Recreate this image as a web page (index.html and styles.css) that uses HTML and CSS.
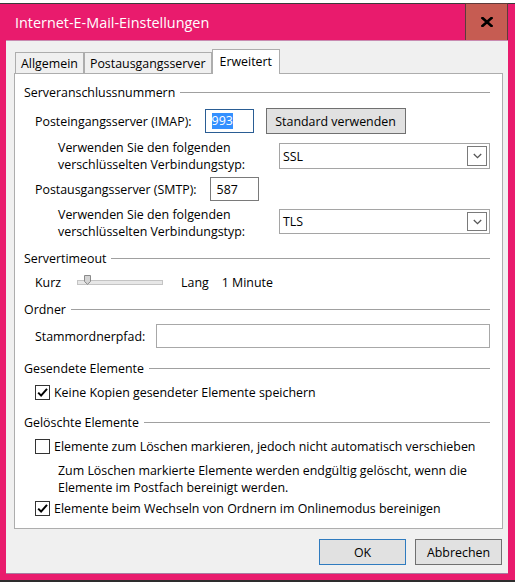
FILE: index.html
```html
<!DOCTYPE html>
<html lang="de">
<head>
<meta charset="utf-8">
<title>Internet-E-Mail-Einstellungen</title>
<link rel="stylesheet" href="styles.css">
</head>
<body>
<div class="topstrip"></div>
<div class="window">
  <div class="titlebar">
    <span class="title">Internet-E-Mail-Einstellungen</span>
    <div class="close">
      <svg width="12" height="10" viewBox="0 0 12 10"><path d="M1.5 1 L10.5 9 M10.5 1 L1.5 9" stroke="#000" stroke-width="2.6" stroke-linecap="square"/></svg>
    </div>
  </div>
  <div class="client">
    <div class="tabs">
      <div class="tab">Allgemein</div>
      <div class="tab">Postausgangsserver</div>
      <div class="tab active">Erweitert</div>
    </div>
    <div class="panel">
      <div class="sec sec-first"><span>Serveranschlussnummern</span></div>

      <div class="row row-imap">
        <span class="lbl">Posteingangsserver (IMAP):</span>
        <div class="field field-focus"><span class="sel">993</span></div>
        <div class="btn btn-std">Standard verwenden</div>
      </div>

      <div class="row row-enc">
        <span class="sublbl">Verwenden Sie den folgenden<br>verschlüsselten Verbindungstyp:</span>
        <div class="combo"><span>SSL</span><span class="arrow"><svg width="9" height="6" viewBox="0 0 9 6"><path d="M0.8 1 L4.5 4.6 L8.2 1" fill="none" stroke="#555" stroke-width="1.3"/></svg></span></div>
      </div>

      <div class="row row-smtp">
        <span class="lbl">Postausgangsserver (SMTP):</span>
        <div class="field">587</div>
      </div>

      <div class="row row-enc row-enc2">
        <span class="sublbl">Verwenden Sie den folgenden<br>verschlüsselten Verbindungstyp:</span>
        <div class="combo"><span>TLS</span><span class="arrow"><svg width="9" height="6" viewBox="0 0 9 6"><path d="M0.8 1 L4.5 4.6 L8.2 1" fill="none" stroke="#555" stroke-width="1.3"/></svg></span></div>
      </div>

      <div class="sec sec-timeout"><span>Servertimeout</span></div>
      <div class="row row-timeout">
        <span class="lbl">Kurz</span>
        <div class="slider">
          <div class="track"></div>
          <svg class="thumb" width="7" height="10" viewBox="0 0 7 10"><path d="M0.5 0.5 H6.5 V6.5 L3.5 9.3 L0.5 6.5 Z" fill="#d4d4d4" stroke="#8a8a8a" stroke-width="1"/></svg>
        </div>
        <span class="lang">Lang</span>
        <span class="minute">1 Minute</span>
      </div>

      <div class="sec sec-folder"><span>Ordner</span></div>
      <div class="row row-stamm">
        <span class="lbl">Stammordnerpfad:</span>
        <div class="field field-wide"></div>
      </div>

      <div class="sec sec-sent"><span>Gesendete Elemente</span></div>
      <div class="row check-row cb-sent">
        <span class="box"><svg width="13" height="13" viewBox="0 0 13 13"><path d="M2.2 6.6 L5.1 9.6 L11 2.8" fill="none" stroke="#000" stroke-width="2"/></svg></span>
        <span>Keine Kopien gesendeter Elemente speichern</span>
      </div>

      <div class="sec sec-deleted"><span>Gelöschte Elemente</span></div>
      <div class="row check-row cb-mark">
        <span class="box"></span>
        <span>Elemente zum Löschen markieren, jedoch nicht automatisch verschieben</span>
      </div>
      <p class="desc">Zum Löschen markierte Elemente werden endgültig gelöscht, wenn die<br>Elemente im Postfach bereinigt werden.</p>
      <div class="row check-row cb-purge">
        <span class="box"><svg width="13" height="13" viewBox="0 0 13 13"><path d="M2.2 6.6 L5.1 9.6 L11 2.8" fill="none" stroke="#000" stroke-width="2"/></svg></span>
        <span>Elemente beim Wechseln von Ordnern im Onlinemodus bereinigen</span>
      </div>
    </div>
    <div class="buttons">
      <div class="btn btn-ok">OK</div>
      <div class="btn btn-cancel">Abbrechen</div>
    </div>
  </div>
</div>
<div class="bottomline"></div>
</body>
</html>
```
FILE: styles.css
```css
* { box-sizing: border-box; }
html, body { margin: 0; padding: 0; }
body {
  width: 515px;
  height: 586px;
  overflow: hidden;
  background: #ffffff;
  font-family: "Open Sans", "Noto Sans", sans-serif;
  font-size: 12.4px;
  color: #000;
}

.topstrip {
  height: 4px;
  background: #fff;
  border-bottom: 1px solid #3a3a3a;
}

.window {
  height: 576px;
  background: #e91b6d;
  padding: 0 7px 0 6px;
  display: flex;
  flex-direction: column;
}

.titlebar {
  height: 36px;
  display: flex;
  align-items: center;
  justify-content: space-between;
}
.title {
  color: #fff;
  font-size: 14.4px;
  padding-left: 9px;
  padding-top: 1px;
}
.close {
  align-self: flex-start;
  margin-top: -1px;
  width: 43px;
  height: 37px;
  background: #c65c52;
  border: 1px solid #5e3b3b;
  border-bottom: 0;
  display: flex;
  align-items: center;
  justify-content: center;
}

.client {
  height: 534px;
  background: #f0f0f0;
  border-top: 1px solid #c98bb1;
  border-bottom: 1px solid #a77ba0;
}

.tabs {
  display: flex;
  align-items: flex-end;
  height: 24px;
  margin: 8px 0 0 9px;
  position: relative;
  z-index: 1;
}
.tab {
  height: 21px;
  padding: 2px 5px 0;
  border: 1px solid #adadad;
  border-bottom: 0;
  background: #f0f0f0;
  line-height: 17px;
  white-space: nowrap;
}
.tab.active {
  height: 25px;
  margin-bottom: -1px;
  padding: 3px 7px 0;
  background: #fff;
}

.panel {
  margin-left: 8px;
  width: 489px;
  height: 456px;
  background: #fff;
  border: 1px solid #adadad;
  padding: 10px 12px 0 9px;
}

.sec {
  display: flex;
  align-items: center;
  height: 16px;
  white-space: nowrap;
}
.sec::after {
  content: "";
  flex: 1;
  height: 1px;
  background: #a0a0a0;
  margin-left: 5px;
}
.sec-timeout { margin-top: 16px; }
.sec-folder { margin-top: 11px; }
.sec-sent { margin-top: 12px; }
.sec-deleted { margin-top: 14px; }

.row {
  display: flex;
  align-items: center;
  padding-left: 11px;
  white-space: nowrap;
}

.row-imap { margin-top: 8px; height: 26px; }
.row-smtp { margin-top: 8px; height: 24px; }
.row-enc { margin-top: 9px; height: 26px; padding-left: 34px; }
.row-enc2 { margin-top: 8px; height: 25px; }
.row-enc2 .sublbl { padding-top: 3px; }
.row-timeout { margin-top: 8px; height: 16px; }
.row-stamm { margin-top: 7px; height: 24px; }

.sublbl {
  width: 221px;
  flex: none;
  line-height: 17px;
}

.field {
  width: 49px;
  height: 24px;
  margin-left: 13px;
  border: 1px solid #7a7a7a;
  background: #fff;
  padding-left: 6px;
  display: flex;
  align-items: center;
}
.field-focus { border-color: #2a5d94; }
.sel {
  background: #3390ff;
  color: #fff;
  line-height: 16px;
}
.field-wide {
  flex: 1;
  width: auto;
  margin-left: 11px;
  border-color: #a8a8a8;
}

.btn {
  display: flex;
  align-items: center;
  justify-content: center;
  background: #e1e1e1;
  border: 1px solid #707070;
  height: 26px;
}
.btn-std {
  width: 140px;
  margin-left: 12px;
}

.combo {
  flex: 1;
  height: 100%;
  border: 1px solid #a5a5a5;
  background: #fff;
  display: flex;
  align-items: center;
  justify-content: space-between;
  padding: 2px 2px 2px 3px;
}
.arrow {
  width: 20px;
  height: 100%;
  border: 1px solid #7a7a7a;
  display: flex;
  align-items: center;
  justify-content: center;
}

.slider {
  position: relative;
  width: 86px;
  height: 16px;
  margin-left: 16px;
  display: flex;
  align-items: center;
}
.track {
  width: 86px;
  height: 5px;
  background: #e7e7e7;
  border: 1px solid #c4c4c4;
}
.thumb {
  position: absolute;
  left: 7px;
  top: 1px;
}
.lang { margin-left: 18px; }
.minute { margin-left: 13px; }

.check-row { height: 16px; }
.cb-sent { margin-top: 8px; }
.cb-mark { margin-top: 8px; }
.cb-purge { margin-top: 4px; }
.box {
  width: 15px;
  height: 15px;
  border: 1px solid #333;
  background: #fff;
  margin-right: 4px;
  display: flex;
  align-items: center;
  justify-content: center;
  flex: none;
}

.desc {
  margin: 8px 0 0 34px;
  line-height: 17px;
}

.buttons {
  display: flex;
  justify-content: flex-end;
  gap: 9px;
  margin: 10px 6px 0 0;
}
.btn-ok, .btn-cancel { width: 87px; }
.btn-ok { border-color: #2f7bbf; }
.btn-cancel { border-color: #707070; }

.bottomline {
  height: 2px;
  background: #2d2d2d;
}
```
